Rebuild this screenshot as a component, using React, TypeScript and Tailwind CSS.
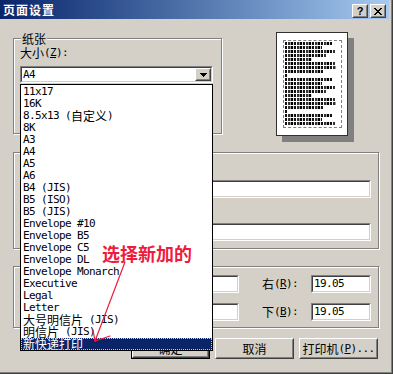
import React from "react";

const CJK = /([\u3000-\u9fff\uff00-\uffef]+)/;
const cn = "font-['Noto_Sans_CJK_SC',sans-serif] text-[12px]";
const mono = "font-['DejaVu_Sans_Mono',monospace] text-[11px] tracking-[-0.62px]";

const paperSizes = [
  "11x17",
  "16K",
  "8.5x13 (自定义)",
  "8K",
  "A3",
  "A4",
  "A5",
  "A6",
  "B4 (JIS)",
  "B5 (ISO)",
  "B5 (JIS)",
  "Envelope #10",
  "Envelope B5",
  "Envelope C5",
  "Envelope DL",
  "Envelope Monarch",
  "Executive",
  "Legal",
  "Letter",
  "大号明信片 (JIS)",
  "明信片 (JIS)",
  "新快递打印",
];

// widths of the fake text lines in the preview page
const para = [47, 37, 50, 41, 27, 50, 51, 38, 3];
const previewLines = [...para, ...para, 47, 37, 50];

function Mixed({ text }: { text: string }) {
  return (
    <>
      {text
        .split(CJK)
        .filter(Boolean)
        .map((part, i) =>
          CJK.test(part) ? (
            <span key={i} className={`${cn} leading-[12px]`}>
              {part}
            </span>
          ) : (
            <span key={i} className={`${mono} leading-[12px] whitespace-pre`}>
              {part}
            </span>
          )
        )}
    </>
  );
}

function Label({ zh, hot, tail = ":" }: { zh: string; hot: string; tail?: string }) {
  return (
    <div className="flex items-center h-[12px] whitespace-pre">
      <span className={`${cn} leading-[12px]`}>{zh}</span>
      <span className={`${mono} leading-[12px]`}>
        (<u className="underline-offset-1">{hot}</u>){tail}
      </span>
    </div>
  );
}

function Raised({ className = "", children }: { className?: string; children?: React.ReactNode }) {
  return (
    <div
      className={`border border-t-white border-l-white border-b-[#404040] border-r-[#404040] bg-[#d4d0c8] ${className}`}
    >
      <div className="h-full w-full border border-t-[#d4d0c8] border-l-[#d4d0c8] border-b-[#808080] border-r-[#808080] flex items-center justify-center">
        {children}
      </div>
    </div>
  );
}

function Sunken({ className = "", children }: { className?: string; children?: React.ReactNode }) {
  return (
    <div
      className={`border border-t-[#808080] border-l-[#808080] border-b-white border-r-white ${className}`}
    >
      <div className="h-full border border-t-[#404040] border-l-[#404040] border-b-[#d4d0c8] border-r-[#d4d0c8] bg-white flex items-center">
        {children}
      </div>
    </div>
  );
}

function Group({
  className = "",
  title,
  children,
}: {
  className?: string;
  title?: React.ReactNode;
  children?: React.ReactNode;
}) {
  return (
    <div className={`relative border border-[#808080] shadow-[inset_1px_1px_0_#fff,1px_1px_0_#fff] ${className}`}>
      {title && (
        <span className="absolute left-[7px] -top-[6px] px-[1px] bg-[#d4d0c8] leading-[12px] flex items-center h-[12px]">
          {title}
        </span>
      )}
      {children}
    </div>
  );
}

function CloseGlyph() {
  const rows = [
    [0, 6],
    [1, 5],
    [2, 4],
    [3, 3],
    [2, 4],
    [1, 5],
    [0, 6],
  ];
  return (
    <svg width="8" height="7" shapeRendering="crispEdges">
      {rows.map(([a, b], y) => (
        <g key={y}>
          <rect x={a} y={y} width="2" height="1" />
          <rect x={b} y={y} width="2" height="1" />
        </g>
      ))}
    </svg>
  );
}

function DownGlyph() {
  return (
    <svg width="7" height="4" shapeRendering="crispEdges">
      {[0, 1, 2, 3].map((i) => (
        <rect key={i} x={i} y={i} width={7 - 2 * i} height="1" />
      ))}
    </svg>
  );
}

function Button({ children, def }: { children: React.ReactNode; def?: boolean }) {
  return (
    <div className={`w-[79px] h-[21px] ${def ? "border border-black" : ""}`}>
      <Raised className="h-full">{children}</Raised>
    </div>
  );
}

export default function App() {
  return (
    <div className="relative w-[393px] h-[374px] overflow-hidden bg-[#d4d0c8] text-black border-r border-b border-r-[#404040] border-b-[#404040]">
      <div className="h-full flex flex-col border-r border-b border-r-[#808080] border-b-[#808080]">
        {/* title bar */}
        <div className="h-[19px] shrink-0 mr-[2px] flex items-start bg-linear-to-r from-[#0a246a] to-[#a6caf0] pl-[3px] pr-[3px]">
          <span className="mt-[3px] font-['Noto_Sans_CJK_SC',sans-serif] text-[12px] leading-[13px] font-bold tracking-[1px] text-white">
            页面设置
          </span>
          <div className="ml-auto mt-[4px] flex gap-[2px]">
            <Raised className="w-[16px] h-[14px]">
              <span className="font-['Liberation_Sans',sans-serif] text-[11px] leading-none font-bold">?</span>
            </Raised>
            <Raised className="w-[16px] h-[14px]">
              <CloseGlyph />
            </Raised>
          </div>
        </div>

        {/* paper + preview */}
        <div className="flex items-start h-[115px] shrink-0">
          <Group
            className="ml-[13px] mt-[19px] w-[209px] h-[96px] pl-[6px] pt-[8px]"
            title={<span className={`${cn} leading-[12px]`}>纸张</span>}
          >
            <Label zh="大小" hot="Z" />
            <Sunken className="mt-[7px] w-[193px] h-[17px]">
              <span className={`${mono} leading-[12px] pl-[1px]`}>A4</span>
              <Raised className="ml-auto w-[16px] h-[13px]">
                <DownGlyph />
              </Raised>
            </Sunken>
          </Group>

          <div className="ml-[54px] mt-[13px] w-[72px] h-[104px] bg-white border border-[#303030] shadow-[6px_6px_0_#808080] pl-[6px] pr-[5px] pt-[7px] pb-[7px]">
            <div className="h-full border border-dashed border-[#808080] px-[1px] pt-[1px]">
              {previewLines.map((w, i) => (
                <div
                  key={i}
                  style={{ width: w }}
                  className="h-[3px] mb-[1px] bg-[repeating-linear-gradient(90deg,#111_0px,#111_2px,#fff_2px,#fff_3px,#333_3px,#333_5px,#999_5px,#999_6px,#000_6px,#000_8px,#ddd_8px,#ddd_9px)]"
                />
              ))}
            </div>
          </div>
        </div>

        {/* header / footer */}
        <Group className="shrink-0 ml-[13px] mt-[18px] w-[366px] h-[97px] pl-[6px] pt-[11px]">
          <Label zh="页眉" hot="H" />
          <Sunken className="mt-[4px] w-[351px] h-[18px]" />
          <div className="mt-[9px]">
            <Label zh="页脚" hot="F" />
          </div>
          <Sunken className="mt-[4px] w-[351px] h-[18px]" />
        </Group>

        {/* margins */}
        <Group
          className="shrink-0 ml-[13px] mt-[17px] w-[366px] h-[62px] pt-[8px]"
          title={<Mixed text="页边距(毫米)" />}
        >
          {[
            ["左", "L", "右", "R"],
            ["上", "T", "下", "B"],
          ].map(([a, ka, b, kb], i) => (
            <div key={i} className={`flex items-center pl-[116px] ${i ? "mt-[10px]" : ""}`}>
              <div className="w-[49px]">
                <Label zh={a} hot={ka} />
              </div>
              <Sunken className="w-[60px] h-[18px]">
                <span className={`${mono} leading-[12px] pl-[1px]`}>19.05</span>
              </Sunken>
              <div className="w-[49px] ml-[23px]">
                <Label zh={b} hot={kb} />
              </div>
              <Sunken className="w-[60px] h-[18px]">
                <span className={`${mono} leading-[12px] pl-[1px]`}>19.05</span>
              </Sunken>
            </div>
          ))}
        </Group>

        {/* buttons */}
        <div className="shrink-0 mt-[10px] pl-[131px] flex gap-[5px]">
          <Button def>
            <span className={`${cn} leading-[12px]`}>确定</span>
          </Button>
          <Button>
            <span className={`${cn} leading-[12px]`}>取消</span>
          </Button>
          <Button>
            <span className="flex items-center whitespace-pre">
              <span className={`${cn} leading-[12px]`}>打印机</span>
              <span className={`${mono} leading-[12px]`}>
                (<u>P</u>)...
              </span>
            </span>
          </Button>
        </div>
      </div>

      {/* open dropdown list */}
      <div className="absolute left-[20px] top-[84px] w-[193px] h-[267px] border border-black bg-white pt-[1px]">
        {paperSizes.map((s, i) => {
          const sel = i === paperSizes.length - 1;
          return (
            <div
              key={s}
              className={`h-[12px] pl-[2px] flex items-center overflow-hidden ${
                sel ? "bg-[#0a246a] text-white outline-1 outline-dotted outline-[#e6cf7a] -outline-offset-1" : ""
              }`}
            >
              <Mixed text={s} />
            </div>
          );
        })}
      </div>

      {/* red annotation */}
      <span className="absolute left-[102px] top-[244px] font-['Noto_Sans_CJK_SC',sans-serif] text-[18px] leading-[18px] font-bold text-[#ee1c3c]">
        选择新加的
      </span>
      <svg className="absolute left-0 top-0 pointer-events-none" width="393" height="374">
        <g stroke="#ee1c3c" strokeWidth="1.2" fill="none" strokeLinecap="round">
          <line x1="125" y1="262" x2="95" y2="341" />
          <line x1="95" y1="341" x2="110" y2="336" />
          <line x1="95" y1="341" x2="93" y2="330" />
        </g>
      </svg>
    </div>
  );
}
